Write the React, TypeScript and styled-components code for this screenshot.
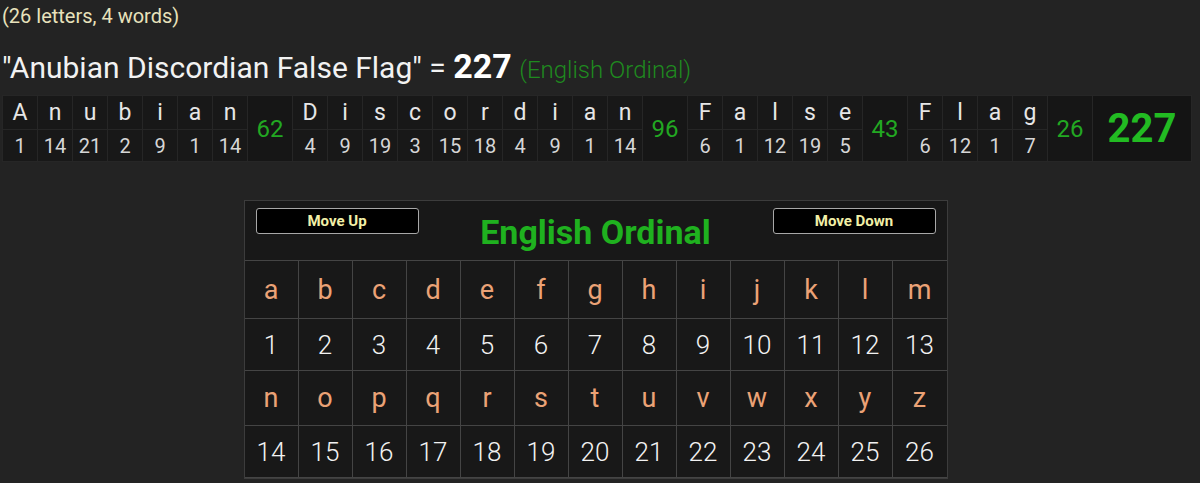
import React from "react";
import styled, { createGlobalStyle } from "styled-components";

const GlobalStyle = createGlobalStyle`
  body {
    margin: 0;
    background: #232323;
    font-family: Roboto, "Liberation Sans", sans-serif;
    color: #eeeeee;
  }
`;

const Page = styled.div`
  width: 1200px;
  height: 483px;
  overflow: hidden;
  display: flex;
  flex-direction: column;
  align-items: flex-start;
`;

const Counts = styled.div`
  margin: 4px 0 0 2px;
  font-size: 20px;
  line-height: 24px;
  color: #e8e2bc;
`;

const Heading = styled.div`
  margin: 21px 0 0 2px;
  font-size: 30px;
  line-height: 34px;
  color: #f2f2f2;
  white-space: nowrap;
`;

const Total = styled.b`
  font-size: 34px;
  font-weight: 700;
  color: #ffffff;
`;

const CipherName = styled.span`
  font-size: 24px;
  font-weight: 300;
  color: #1f8a1f;
`;

const Breakdown = styled.table`
  margin: 8px 0 0 2px;
  border-collapse: separate;
  border-spacing: 1px;
  background: #262626;
`;

const Cell = styled.td<{ $w: number }>`
  width: ${(p) => p.$w}px;
  min-width: ${(p) => p.$w}px;
  padding: 0;
  background: #181818;
  text-align: center;
  white-space: nowrap;
`;

const LetterCell = styled(Cell)`
  height: 33px;
  font-size: 23px;
  color: #e6e6e6;
`;

const NumberCell = styled(Cell)`
  height: 31px;
  font-size: 20px;
  color: #d6d6d6;
`;

const WordSum = styled(Cell)`
  font-size: 24px;
  color: #22a822;
  background: #161616;
`;

const GrandSum = styled(Cell)`
  font-size: 40px;
  font-weight: 700;
  color: #22bb22;
  background: #141414;
`;

const Board = styled.div`
  align-self: center;
  margin: 38px 0 0 -9px;
  width: 702px;
  border: 1px solid #3c3c3c;
  background: #181818;
`;

const BoardHead = styled.div`
  height: 59px;
  display: flex;
  align-items: flex-start;
  justify-content: space-between;
  padding: 0 11px;
  border-bottom: 1px solid #444;
`;

const MoveButton = styled.button`
  margin-top: 7px;
  width: 163px;
  height: 26px;
  background: #000;
  border: 1.5px solid #a8a8a8;
  border-radius: 3px;
  color: #f2f0a8;
  font-family: Roboto, "Liberation Sans", sans-serif;
  font-size: 15px;
  font-weight: 700;
  padding: 0;
`;

const BoardTitle = styled.div`
  margin-top: 11px;
  font-size: 34px;
  line-height: 40px;
  font-weight: 700;
  color: #1fb11f;
`;

const Grid = styled.div`
  display: grid;
  grid-template-columns: repeat(13, 1fr);
`;

const GridCell = styled.div<{ $kind: "letter" | "number"; $h: number }>`
  height: ${(p) => p.$h}px;
  display: flex;
  align-items: center;
  justify-content: center;
  border-right: 1px solid #444;
  border-bottom: 1px solid #444;
  &:nth-child(13n) {
    border-right: none;
  }
  font-size: ${(p) => (p.$kind === "letter" ? 27 : 26)}px;
  font-weight: ${(p) => (p.$kind === "letter" ? 400 : 300)};
  color: ${(p) => (p.$kind === "letter" ? "#eba276" : "#f2f2f2")};
`;

const words = ["Anubian", "Discordian", "False", "Flag"];
const val = (c: string) => c.toLowerCase().charCodeAt(0) - 96;
const alphabet = "abcdefghijklmnopqrstuvwxyz".split("");

export default function App() {
  const sums = words.map((w) => w.split("").reduce((a, c) => a + val(c), 0));
  const grand = sums.reduce((a, b) => a + b, 0);

  const rows = [
    { letters: alphabet.slice(0, 13), start: 1, h: [57, 51] },
    { letters: alphabet.slice(13), start: 14, h: [54, 51] },
  ];

  return (
    <>
      <GlobalStyle />
      <Page>
        <Counts>(26 letters, 4 words)</Counts>
        <Heading>
          "Anubian Discordian False Flag" = <Total>{grand}</Total>{" "}
          <CipherName>(English Ordinal)</CipherName>
        </Heading>
        <Breakdown>
          <tbody>
            <tr>
              {words.map((w, wi) => (
                <React.Fragment key={w}>
                  {w.split("").map((c, ci) => (
                    <LetterCell key={ci} $w={34}>
                      {c}
                    </LetterCell>
                  ))}
                  <WordSum $w={44} rowSpan={2}>
                    {sums[wi]}
                  </WordSum>
                </React.Fragment>
              ))}
              <GrandSum $w={98} rowSpan={2}>
                {grand}
              </GrandSum>
            </tr>
            <tr>
              {words.map((w) =>
                w.split("").map((c, ci) => (
                  <NumberCell key={w + ci} $w={34}>
                    {val(c)}
                  </NumberCell>
                ))
              )}
            </tr>
          </tbody>
        </Breakdown>
        <Board>
          <BoardHead>
            <MoveButton>Move Up</MoveButton>
            <BoardTitle>English Ordinal</BoardTitle>
            <MoveButton>Move Down</MoveButton>
          </BoardHead>
          <Grid>
            {rows.map((r) => (
              <React.Fragment key={r.start}>
                {r.letters.map((l) => (
                  <GridCell key={l} $kind="letter" $h={r.h[0]}>
                    {l}
                  </GridCell>
                ))}
                {r.letters.map((l, i) => (
                  <GridCell key={l + "n"} $kind="number" $h={r.h[1]}>
                    {r.start + i}
                  </GridCell>
                ))}
              </React.Fragment>
            ))}
          </Grid>
        </Board>
      </Page>
    </>
  );
}
